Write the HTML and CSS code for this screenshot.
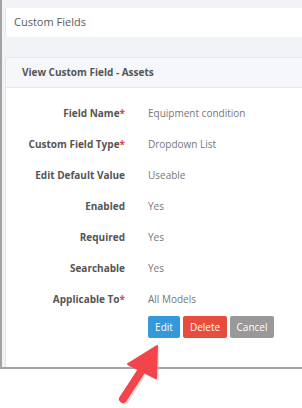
FILE: index.html
```html
<!DOCTYPE html>
<html lang="en">
  <head>
    <meta charset="UTF-8" />
    <meta name="viewport" content="width=device-width, initial-scale=1.0" />
    <title>View Custom Field</title>
    <link rel="stylesheet" href="styles.css">
  </head>

  <body>
    <div class="shot">
      <div class="page-title">Custom Fields</div>

      <div class="panel">
        <div class="panel-heading">View Custom Field - Assets</div>
        <div class="panel-body">
          <div class="field-row">
            <span class="field-label">Field Name<span class="req">*</span></span>
            <span class="field-value">Equipment condition</span>
          </div>
          <div class="field-row">
            <span class="field-label">Custom Field Type<span class="req">*</span></span>
            <span class="field-value">Dropdown List</span>
          </div>
          <div class="field-row">
            <span class="field-label">Edit Default Value</span>
            <span class="field-value">Useable</span>
          </div>
          <div class="field-row">
            <span class="field-label">Enabled</span>
            <span class="field-value">Yes</span>
          </div>
          <div class="field-row">
            <span class="field-label">Required</span>
            <span class="field-value">Yes</span>
          </div>
          <div class="field-row">
            <span class="field-label">Searchable</span>
            <span class="field-value">Yes</span>
          </div>
          <div class="field-row">
            <span class="field-label">Applicable To<span class="req">*</span></span>
            <span class="field-value">All Models</span>
          </div>
          <div class="actions">
            <button class="btn btn-edit">Edit</button>
            <button class="btn btn-delete">Delete</button>
            <button class="btn btn-cancel">Cancel</button>
          </div>
        </div>
      </div>
    </div>

    <!-- callout arrow pointing at the Edit button -->
    <svg class="arrow" width="302" height="408" viewBox="0 0 302 408">
      <g fill="#b9b9b9" stroke="#b9b9b9" opacity="0.5" transform="translate(1.5,1.5)">
        <line x1="142" y1="370" x2="123" y2="399" stroke-width="8" stroke-linecap="round" />
        <polygon points="157,346 128,364 156,378" stroke-width="2" stroke-linejoin="round" />
      </g>
      <g fill="#f2444b" stroke="#f2444b">
        <line x1="142" y1="370" x2="123" y2="399" stroke-width="8" stroke-linecap="round" />
        <polygon points="157,346 128,364 156,378" stroke-width="2" stroke-linejoin="round" />
      </g>
    </svg>
  </body>
</html>
```

FILE: styles.css
```css
body {
  margin: 0;
  padding: 0;
  background-color: #ffffff;
  font-family: "Open Sans", Arial, sans-serif;
  position: relative;
  width: 302px;
  height: 408px;
  overflow: hidden;
}

.shot {
  width: 297px;
  height: 359px;
  border: 2px solid #a3a3a3;
  border-top: none;
  background-color: #f2f3f7;
  padding: 8px 0 0 3px;
  box-sizing: content-box;
  overflow: hidden;
}

.page-title {
  height: 29px;
  background-color: #ffffff;
  border-left: 1px solid #e7e8ed;
  padding-left: 8px;
  font-size: 11px;
  line-height: 27px;
  color: #5a5a5a;
  box-sizing: border-box;
}

.panel {
  margin-top: 20px;
  background-color: #ffffff;
  border-left: 1px solid #e4e6eb;
  border-top: 1px solid #e8eaef;
  height: 400px;
}

.panel-heading {
  height: 29px;
  background-color: #f6f7fa;
  border-bottom: 1px solid #e6e8ee;
  padding-left: 16px;
  font-size: 10px;
  font-weight: bold;
  line-height: 29px;
  color: #555555;
}

.panel-body {
  padding-top: 9px;
}

.field-row {
  display: flex;
  align-items: center;
  height: 31px;
  font-size: 10px;
}

.field-label {
  width: 119px;
  text-align: right;
  font-weight: bold;
  color: #555555;
}

.req {
  color: #e4473c;
}

.field-value {
  margin-left: 23px;
  color: #777777;
}

.actions {
  display: flex;
  gap: 3px;
  margin-top: 2px;
  padding-left: 142px;
}

.btn {
  height: 22px;
  padding: 0;
  border: none;
  border-radius: 2px;
  color: #ffffff;
  font-family: "Open Sans", Arial, sans-serif;
  font-size: 10px;
  cursor: pointer;
}

.btn-edit {
  width: 32px;
  background-color: #3498db;
}

.btn-delete {
  width: 44px;
  background-color: #e74c3c;
}

.btn-cancel {
  width: 44px;
  background-color: #999999;
}

.arrow {
  position: absolute;
  left: 0;
  top: 0;
}
```
